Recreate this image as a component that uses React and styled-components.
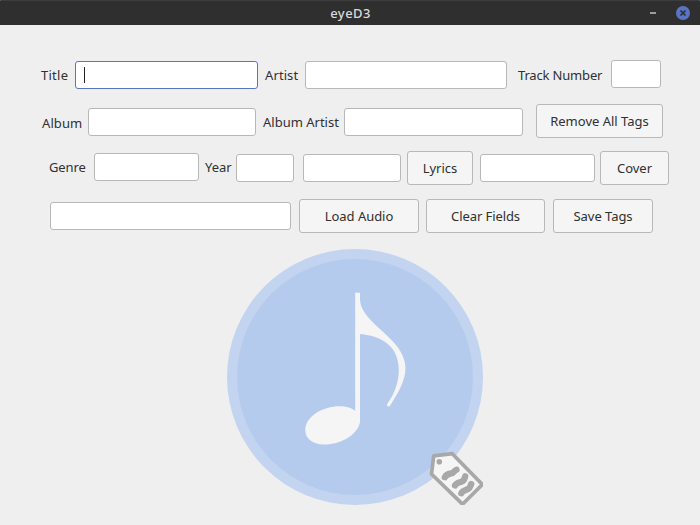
import React from "react";
import styled, { createGlobalStyle } from "styled-components";

const GlobalStyle = createGlobalStyle`
  * { box-sizing: border-box; }
  body {
    margin: 0;
    background: #efefef;
    overflow: hidden;
    font-family: "Noto Sans", "Open Sans", sans-serif;
  }
`;

const Window = styled.div`
  width: 700px;
  height: 525px;
  display: flex;
  flex-direction: column;
  background: #efefef;
  color: #303030;
`;

const TitleBar = styled.header`
  height: 25px;
  flex: none;
  display: grid;
  grid-template-columns: 1fr auto 1fr;
  align-items: center;
  padding: 0 10px 0 11px;
  background: #2f2f2f;
  border-top: 1px solid #3d3d3d;
  border-radius: 1px 1px 0 0;
`;

const WindowTitle = styled.h1`
  grid-column: 2;
  margin: -1px 0 0;
  font-size: 13px;
  line-height: 18px;
  font-weight: 500;
  letter-spacing: 0.4px;
  color: #dadada;
`;

const WindowControls = styled.div`
  display: flex;
  justify-content: flex-end;
  align-items: center;
  gap: 20px;
`;

const MinimizeMark = styled.span`
  width: 6px;
  height: 2px;
  margin-top: -1px;
  background: #9c9c9c;
`;

const CloseIcon = styled.svg`
  display: block;
  width: 14px;
  height: 14px;
  margin-top: -1px;
`;

const Form = styled.main`
  display: flex;
  flex-direction: column;
  padding-top: 35px;
`;

const Row = styled.div`
  display: flex;
  align-items: flex-start;
  height: ${(p) => p.$height}px;
  padding-left: ${(p) => p.$indent}px;
`;

const Label = styled.label`
  flex: none;
  width: ${(p) => p.$width}px;
  margin-left: ${(p) => p.$gap || 0}px;
  margin-top: ${(p) => p.$drop}px;
  font-size: 13px;
  line-height: 18px;
  letter-spacing: ${(p) => p.$track || 0}px;
  white-space: nowrap;
`;

const Field = styled.div`
  flex: none;
  display: flex;
  align-items: center;
  width: ${(p) => p.$width}px;
  height: 28px;
  margin-left: ${(p) => p.$gap || 0}px;
  margin-top: ${(p) => p.$drop || 0}px;
  padding-left: 8px;
  background: #fff;
  border: 1px solid ${(p) => (p.$focused ? "#5b73c4" : "#b8b8b8")};
  border-radius: 3px;
`;

const Caret = styled.span`
  width: 1px;
  height: 16px;
  background: #222;
`;

const Button = styled.button`
  flex: none;
  width: ${(p) => p.$width}px;
  height: 34px;
  margin: ${(p) => p.$drop || 0}px 0 0 ${(p) => p.$gap}px;
  padding: 0;
  background: #f5f5f5;
  border: 1px solid #b8b8b8;
  border-radius: 3px;
  color: inherit;
  font-family: inherit;
  font-size: 13px;
  line-height: 18px;
  letter-spacing: ${(p) => p.$track || 0}px;
  white-space: nowrap;
`;

const Artwork = styled.svg`
  display: block;
  width: 256px;
  height: 256px;
  margin: 5px 0 0 227px;
`;

function CoverArt() {
  return (
    <Artwork viewBox="227 249 256 256">
      <circle cx="355" cy="377" r="128" fill="#c3d4f0" />
      <circle cx="355" cy="377" r="118" fill="#b5cbee" />
      <path
        fill="#f5f5f5"
        d="M355.2 292.7H360V300C361 324 405.3 338 405.5 368C405.5 382 396 396 390.2 405.5C388.7 407.6 386 406 387.3 403.8C395 393 398.8 382 398.8 370C398.8 347 383 336 360 334V422C358 434 342 444.5 324 444.5C312 444.5 305.3 438 305.3 430C305.3 416 324 406.3 339 406.3C347 406.3 352 408 355.2 411Z"
      />
      <path
        d="M433.7 455.8L452.3 453.7L482.3 484.5L462.5 504.2L431.5 474Z"
        fill="#f5f5f5"
        stroke="#a8a8a8"
        strokeWidth="3.7"
        strokeLinejoin="round"
      />
      <circle cx="439.3" cy="461.7" r="2.8" fill="#a8a8a8" />
      <g fill="none" stroke="#a8a8a8" strokeWidth="6.3" strokeLinecap="round" strokeLinejoin="round">
        <path d="M444.8 477.3C446.3 474.3 448 473.8 451 473.5C454.5 473 454 470.3 456.5 469.7" />
        <path d="M455 485.5C456.5 482.5 459 482.6 461.5 481.7C465 480.3 464.4 478 465.2 476.3" />
        <path d="M461.3 493.3C462.8 490.3 465.3 490.4 467.8 489.2C470.8 487.6 470.2 486 471.2 484" />
      </g>
    </Artwork>
  );
}

export default function App() {
  return (
    <>
      <GlobalStyle />
      <Window>
        <TitleBar>
          <WindowTitle>eyeD3</WindowTitle>
          <WindowControls>
            <MinimizeMark />
            <CloseIcon viewBox="0 0 14 14">
              <circle cx="7" cy="7" r="7" fill="#5b73c4" />
              <path d="M4.5 4.5L9.5 9.5M9.5 4.5L4.5 9.5" stroke="#2f2f2f" strokeWidth="1.7" />
            </CloseIcon>
          </WindowControls>
        </TitleBar>
        <Form>
          <Row $height={44} $indent={41}>
            <Label $width={34} $drop={6} $track={0.25}>Title</Label>
            <Field $width={183} $drop={1} $focused><Caret /></Field>
            <Label $width={40} $gap={7} $drop={6} $track={0.1}>Artist</Label>
            <Field $width={202} $drop={1} />
            <Label $width={93} $gap={11} $drop={6} $track={-0.17}>Track Number</Label>
            <Field $width={50} />
          </Row>
          <Row $height={47} $indent={42}>
            <Label $width={46} $drop={10} $track={0.1}>Album</Label>
            <Field $width={168} $drop={4} />
            <Label $width={81} $gap={7} $drop={9}>Album Artist</Label>
            <Field $width={179} $drop={4} />
            <Button $width={127} $gap={13}>Remove All Tags</Button>
          </Row>
          <Row $height={48} $indent={49}>
            <Label $width={45} $drop={7} $track={-0.1}>Genre</Label>
            <Field $width={105} $drop={2} />
            <Label $width={31} $gap={6} $drop={7}>Year</Label>
            <Field $width={58} $drop={3} />
            <Field $width={98} $gap={9} $drop={3} />
            <Button $width={66} $gap={6}>Lyrics</Button>
            <Field $width={115} $gap={7} $drop={3} />
            <Button $width={69} $gap={5}>Cover</Button>
          </Row>
          <Row $height={45} $indent={50}>
            <Field $width={241} $drop={3} />
            <Button $width={120} $gap={8} $track={-0.05}>Load Audio</Button>
            <Button $width={119} $gap={7} $track={-0.08}>Clear Fields</Button>
            <Button $width={100} $gap={8} $track={-0.05}>Save Tags</Button>
          </Row>
          <CoverArt />
        </Form>
      </Window>
    </>
  );
}
